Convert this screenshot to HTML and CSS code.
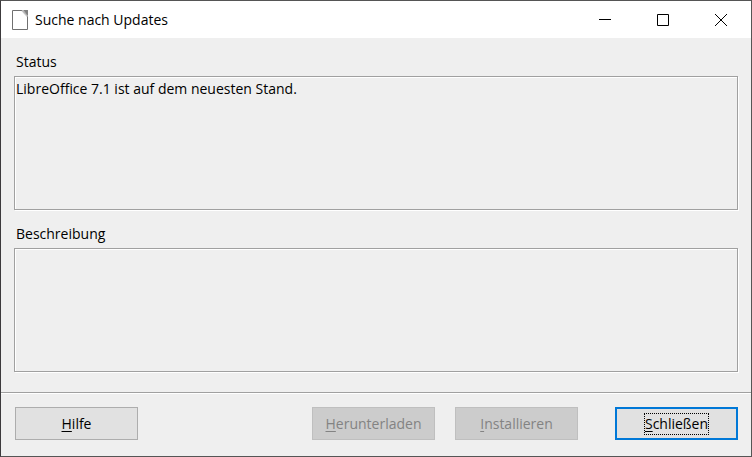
FILE: index.html
```html
<!DOCTYPE html>
<html lang="de">
<head>
<meta charset="utf-8">
<title>Suche nach Updates</title>
<link rel="stylesheet" href="styles.css">
</head>
<body>
<div class="window">
  <header class="titlebar">
    <svg class="app-icon" width="18" height="20" viewBox="0 0 18 20" aria-hidden="true">
      <path d="M.5.5H10.500L15.500 5.500V19.500H.5Z" fill="#fff" stroke="#707070"/>
      <path d="M11 0H16V6Z" fill="#808080"/>
      <path d="M10 .5L15.500 6.500" fill="none" stroke="#c4c4c4" stroke-width="1.500"/>
    </svg>
    <h1 class="title">Suche nach Updates</h1>
    <div class="window-controls">
      <button class="control" type="button" aria-label="Minimieren"><svg width="12" height="12" viewBox="0 0 12 12"><path d="M0 5.500H12" /></svg></button>
      <button class="control" type="button" aria-label="Maximieren"><svg width="12" height="12" viewBox="0 0 12 12"><path d="M.5.5H11.500V11.500H.5Z" /></svg></button>
      <button class="control" type="button" aria-label="Fenster schließen"><svg width="12" height="12" viewBox="0 0 12 12"><path d="M0 0L12 12M12 0L0 12" /></svg></button>
    </div>
  </header>
  <main class="content">
    <label class="label" for="status">Status</label>
    <textarea class="field field-status" id="status" readonly>LibreOffice 7.1 ist auf dem neuesten Stand.</textarea>
    <label class="label" for="description">Beschreibung</label>
    <textarea class="field field-description" id="description" readonly></textarea>
  </main>
  <footer class="actions">
    <button class="button help" type="button"><span class="caption"><u>H</u>ilfe</span></button>
    <button class="button" type="button" disabled><span class="caption"><u>H</u>erunterladen</span></button>
    <button class="button" type="button" disabled><span class="caption"><u>I</u>nstallieren</span></button>
    <button class="button default" type="button"><span class="caption"><u>S</u>chließen</span></button>
  </footer>
</div>
</body>
</html>
```
FILE: styles.css
```css
* {
  box-sizing: border-box;
}

body {
  margin: 0;
  font: 14px/20px "Open Sans", "Noto Sans", sans-serif;
  color: #000;
}

button,
textarea {
  font: inherit;
  color: inherit;
}

.window {
  display: flex;
  flex-direction: column;
  min-height: 100vh;
  border: 1px solid #555;
  border-left-color: #3c3a3c;
  background: #efefef;
}

.titlebar {
  display: flex;
  align-items: center;
  height: 37px;
  padding: 0 1px 0 11px;
  background: #fff;
}

.app-icon {
  flex: none;
}

.title {
  flex: 1;
  margin: 0 0 0 5px;
  font-size: 14px;
  font-weight: 400;
}

.window-controls {
  display: flex;
}

.control {
  display: grid;
  place-items: center;
  width: 58px;
  height: 36px;
  padding: 0;
  border: 0;
  background: none;
}

.control svg {
  fill: none;
  stroke: #000;
}

.content {
  display: flex;
  flex: 1;
  flex-direction: column;
  padding: 14px 13px 20px;
}

.label {
  margin: 0 2px 4px;
}

.field {
  display: block;
  width: 100%;
  min-height: 0;
  margin: 0;
  padding: 2px 1px;
  border: 1px solid #a0a0a0;
  border-radius: 0;
  outline: 0;
  background: #efefef;
  box-shadow: inset 1px 1px #fff, 1px 1px #fff;
  resize: none;
}

.field-status {
  flex: 1 0 133px;
  margin-bottom: 14px;
}

.field-description {
  flex: 1 0 123px;
}

.actions {
  display: flex;
  gap: 20px;
  padding: 14px 13px 16px 14px;
  border-top: 1px solid #a0a0a0;
  box-shadow: inset 0 1px #fff;
}

.button {
  display: grid;
  place-items: center;
  width: 123px;
  height: 33px;
  padding: 0;
  border: 1px solid #adadad;
  background: #e1e1e1;
}

.button:disabled {
  border-color: #bfbfbf;
  background: #ccc;
  color: #838383;
}

.help {
  margin-right: auto;
}

.default {
  margin-left: 17px;
  border: 2px solid #0078d7;
}

.default .caption {
  outline: 1px dotted #000;
}

.caption u {
  text-decoration-thickness: 1px;
  text-underline-offset: 2px;
}
```
